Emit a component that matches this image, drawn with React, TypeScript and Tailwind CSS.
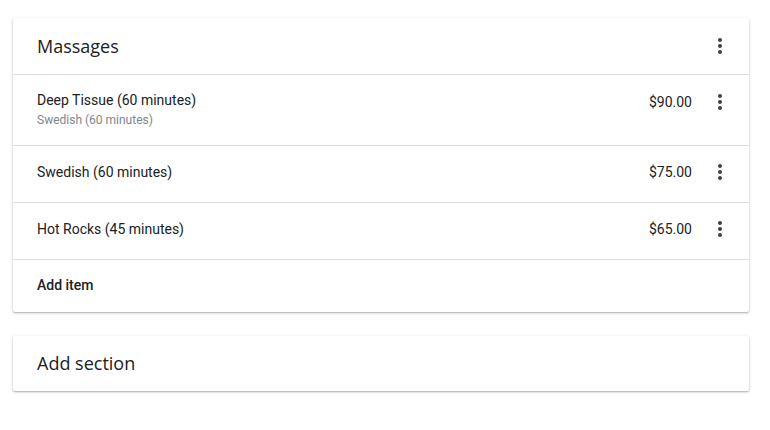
import React from "react";

type Item = { name: string; sub?: string; price: string };

const ITEMS: Item[] = [
  { name: "Deep Tissue (60 minutes)", sub: "Swedish (60 minutes)", price: "$90.00" },
  { name: "Swedish (60 minutes)", price: "$75.00" },
  { name: "Hot Rocks (45 minutes)", price: "$65.00" },
];

function MoreVert() {
  return (
    <svg width="24" height="24" viewBox="0 0 24 24" className="fill-[#3c4043]">
      <path d="M12 8c1.1 0 2-.9 2-2s-.9-2-2-2-2 .9-2 2 .9 2 2 2zm0 2c-1.1 0-2 .9-2 2s.9 2 2 2 2-.9 2-2-.9-2-2-2zm0 6c-1.1 0-2 .9-2 2s.9 2 2 2 2-.9 2-2-.9-2-2-2z" />
    </svg>
  );
}

export default function App() {
  return (
    <main className="min-h-[430px] bg-white px-[13px] pt-[18px] font-['Roboto',sans-serif] text-[#202124]">
      <section className="w-[736px] rounded-[2px] bg-white shadow-[0_1px_3px_rgba(0,0,0,0.25),0_1px_1px_rgba(0,0,0,0.12)]">
        <div className="flex h-[57px] items-center justify-between border-b border-[#dadce0] pl-6 pr-[17px]">
          <h2 className="font-['Open_Sans',sans-serif] text-[18px] text-[#202124]">Massages</h2>
          <MoreVert />
        </div>
        {ITEMS.map((it) =>
          it.sub ? (
            <div
              key={it.name}
              className="flex h-[71px] items-start justify-between border-b border-[#dadce0] pl-6 pr-[17px] pt-[15px]"
            >
              <div>
                <div className="text-[14px] leading-5">{it.name}</div>
                <div className="text-[12px] leading-5 text-[#80868b]">{it.sub}</div>
              </div>
              <div className="flex items-center gap-4">
                <span className="text-[14px]">{it.price}</span>
                <MoreVert />
              </div>
            </div>
          ) : (
            <div
              key={it.name}
              className="flex h-[57px] items-center justify-between border-b border-[#dadce0] pb-1 pl-6 pr-[17px]"
            >
              <div className="text-[14px] leading-5">{it.name}</div>
              <div className="flex items-center gap-4">
                <span className="text-[14px]">{it.price}</span>
                <MoreVert />
              </div>
            </div>
          )
        )}
        <div className="flex h-[52px] items-center pb-[2px] pl-6 text-[14px] font-medium">Add item</div>
      </section>
      <section className="mt-[24px] flex h-[55px] w-[736px] items-center rounded-[2px] bg-white pl-6 shadow-[0_1px_3px_rgba(0,0,0,0.25),0_1px_1px_rgba(0,0,0,0.12)]">
        <span className="font-['Open_Sans',sans-serif] text-[18px]">Add section</span>
      </section>
    </main>
  );
}
